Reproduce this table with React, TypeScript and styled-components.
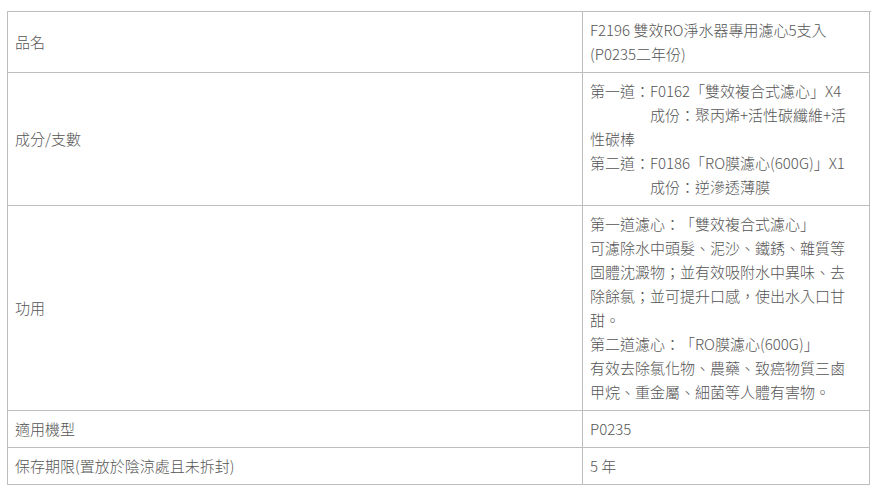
import styled, { createGlobalStyle } from "styled-components"

const GlobalStyle = createGlobalStyle`
    html, body {
        margin: 0;
        padding: 0;
        background: #fff;
    }
    body {
        font-family: "Noto Sans CJK TC", "Noto Sans", sans-serif;
        color: #555;
    }
`

const Page = styled.div`
    padding: 11px 7px;
`

const Table = styled.div`
    display: grid;
    grid-template-columns: 575px 287px;
    width: 863px;
    border-top: 1px solid #bdbdbd;
    border-left: 1px solid #bdbdbd;
    font-size: 15px;
    line-height: 24px;
    font-weight: 300;
    text-spacing-trim: space-all;
`

const Cell = styled.div<{ $label?: boolean }>`
    display: flex;
    flex-direction: column;
    justify-content: ${(p) => (p.$label ? "center" : "flex-start")};
    padding: ${(p) => (p.$label ? "6px 8px 6px 7px" : "6px 15px 6px 7px")};
    border-right: 1px solid #bdbdbd;
    border-bottom: 1px solid #bdbdbd;
    box-sizing: border-box;
`

const Line = styled.div`
    white-space: pre-wrap;
`

const rows: { label: string; lines: string[] }[] = [
    {
        label: "品名",
        lines: ["F2196 雙效RO淨水器專用濾心5支入(P0235二年份)"],
    },
    {
        label: "成分/支數",
        lines: [
            "第一道：F0162「雙效複合式濾心」X4",
            "\u3000\u3000\u3000\u3000成份：聚丙烯+活性碳纖維+活性碳棒",
            "第二道：F0186「RO膜濾心(600G)」X1",
            "\u3000\u3000\u3000\u3000成份：逆滲透薄膜",
        ],
    },
    {
        label: "功用",
        lines: [
            "第一道濾心：「雙效複合式濾心」",
            "可濾除水中頭髮、泥沙、鐵銹、雜質等固體沈澱物；並有效吸附水中異味、去除餘氯；並可提升口感，使出水入口甘甜。",
            "第二道濾心：「RO膜濾心(600G)」",
            "有效去除氯化物、農藥、致癌物質三鹵甲烷、重金屬、細菌等人體有害物。",
        ],
    },
    { label: "適用機型", lines: ["P0235"] },
    { label: "保存期限(置放於陰涼處且未拆封)", lines: ["5 年"] },
]

const App = () => {
    return <>
        <GlobalStyle />
        <Page>
            <Table>
                {rows.map((r) => [
                    <Cell $label key={r.label + "-l"}>{r.label}</Cell>,
                    <Cell key={r.label + "-v"}>
                        {r.lines.map((l, i) => <Line key={i}>{l}</Line>)}
                    </Cell>,
                ])}
            </Table>
        </Page>
    </>
}

export default App
